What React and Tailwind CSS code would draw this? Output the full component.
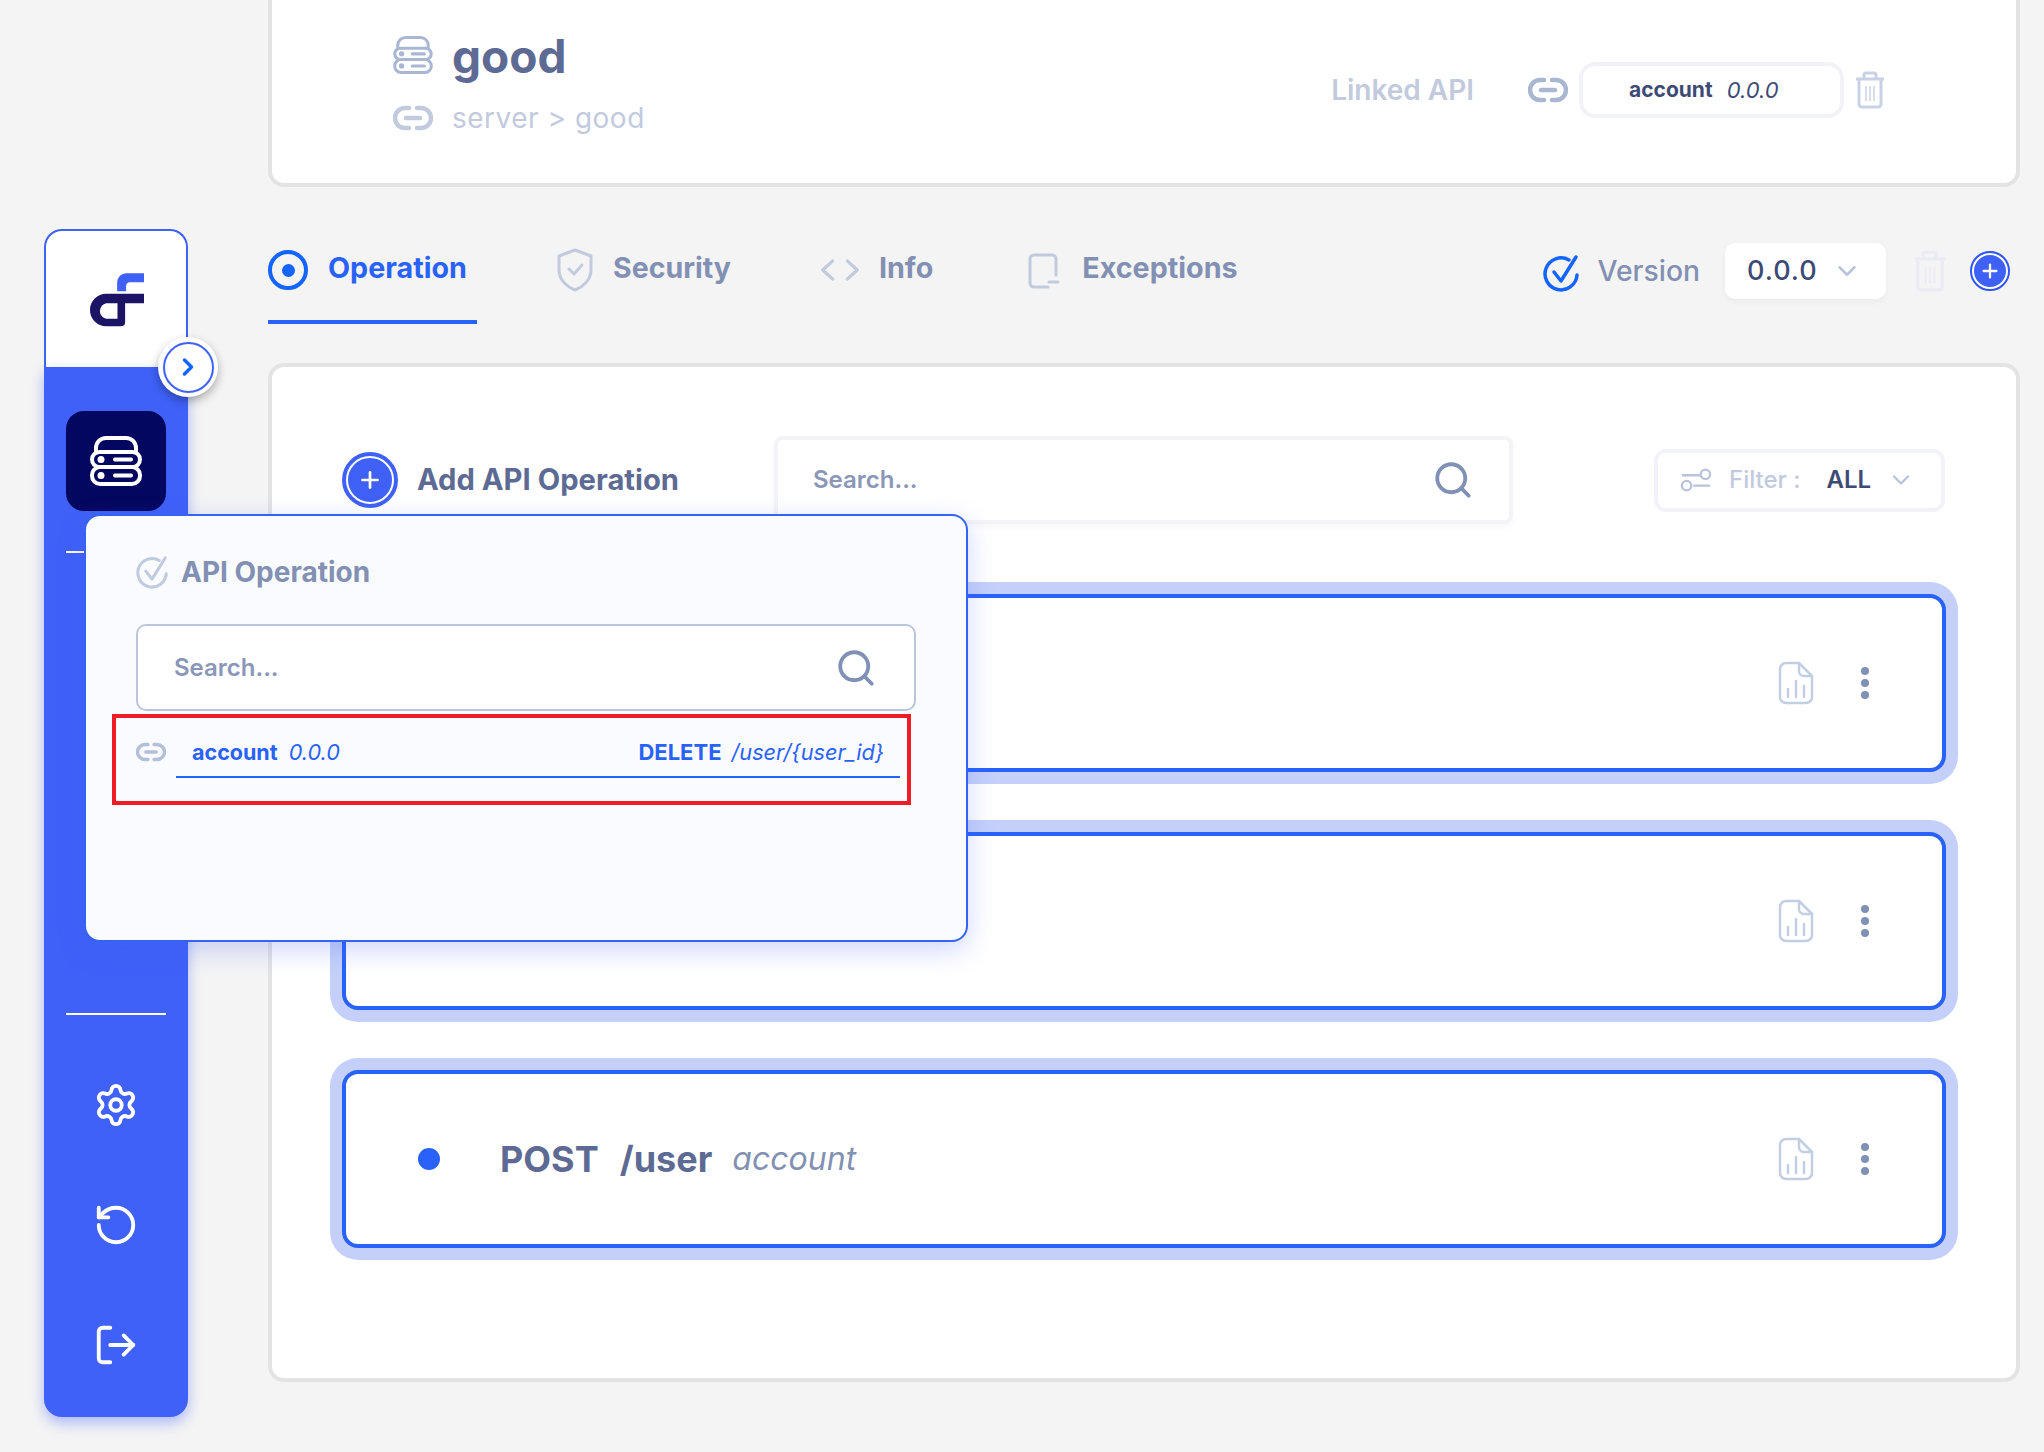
import { ChevronDown, ChevronRight, Settings, RotateCcw, LogOut, Search, Plus } from 'lucide-react';

function ServerIcon({ className }) {
  return (
    <svg viewBox="0 0 52 50" fill="none" stroke="currentColor" strokeWidth="4" className={className}>
      <path d="M6 16 v-4 a10 10 0 0 1 10-10 h20 a10 10 0 0 1 10 10 v4" />
      <rect x="2" y="16" width="48" height="15" rx="7.5" />
      <rect x="2" y="31" width="48" height="17" rx="8" />
      <circle cx="11" cy="23.5" r="1.5" fill="currentColor" />
      <circle cx="11" cy="39.5" r="1.5" fill="currentColor" />
      <path d="M25 23.5 h16 M25 39.5 h16" strokeLinecap="round" />
    </svg>
  );
}

function LinkIcon({ className }) {
  return (
    <svg viewBox="0 0 40 26" fill="none" stroke="currentColor" strokeWidth="4.5" strokeLinecap="round" className={className}>
      <path d="M16 3 H12 a10 10 0 0 0 0 20 h4" />
      <path d="M24 3 h4 a10 10 0 0 1 0 20 h-4" />
      <path d="M13 13 h14" />
    </svg>
  );
}

function TrashIcon({ className }) {
  return (
    <svg viewBox="0 0 32 38" fill="none" stroke="currentColor" strokeWidth="3" className={className}>
      <path d="M2 8 h28 M10 8 V4 a2 2 0 0 1 2-2 h8 a2 2 0 0 1 2 2 v4" />
      <path d="M5 8 v25 a3 3 0 0 0 3 3 h16 a3 3 0 0 0 3-3 V8" />
      <path d="M12 15 v15 M16 15 v15 M20 15 v15" strokeWidth="1.5" />
    </svg>
  );
}

function FileChartIcon({ className }) {
  return (
    <svg viewBox="0 0 36 44" fill="none" stroke="currentColor" strokeWidth="2.5" strokeLinecap="round" strokeLinejoin="round" className={className}>
      <path d="M21 2 H8 a6 6 0 0 0-6 6 v28 a6 6 0 0 0 6 6 h20 a6 6 0 0 0 6-6 V15 Z" />
      <path d="M21 2 v8 a5 5 0 0 0 5 5 h8" />
      <path d="M10 28 v8 M18 20 v16 M26 25 v11" />
    </svg>
  );
}

function CheckCircle({ className }) {
  return (
    <svg viewBox="0 0 36 38" fill="none" stroke="currentColor" strokeWidth="3.5" strokeLinecap="round" strokeLinejoin="round" className={className}>
      <path d="M26 6 A16 16 0 1 0 34 21" />
      <path d="M11 18 l7 9 L33 3" />
    </svg>
  );
}

function Logo() {
  return (
    <svg viewBox="170 150 175 170" className="w-[58px] h-[57px]">
      <path fillRule="evenodd" fill="#1c1464" d="M342 218 H228 a49 49 0 0 0 0 98 H272 q13 0 13-13 V246 H342 Z M262 246 V293 H228 a24 24 0 0 1 0-47 Z" />
      <path fill="#3f61f8" d="M261 210 V183 a27 27 0 0 1 27-27 H342 V183 H300 q-12 0-12 12 V210 Z" />
    </svg>
  );
}

function Sidebar() {
  return (
    <div className="relative ml-[44px] mt-[229px] w-[144px] h-[1188px] flex flex-col shrink-0">
      <div className="h-[138px] bg-white border-2 border-b-0 border-[#3f61f8] rounded-t-[18px] flex items-center justify-center">
        <Logo />
      </div>
      <div className="flex-1 bg-[#3f61f8] rounded-b-[18px] shadow-[0_6px_14px_rgba(63,97,248,0.4)] flex flex-col items-center pt-[44px]">
        <div className="w-[100px] h-[100px] bg-[#04075f] rounded-[18px] flex items-center justify-center">
          <ServerIcon className="w-[52px] h-[50px] text-white" />
        </div>
        <div className="w-[100px] h-[2px] bg-white mt-[40px]" />
        <div className="w-[100px] h-[2px] bg-white mt-[460px]" />
        <Settings className="w-[46px] h-[46px] text-white mt-[67px]" strokeWidth={2} />
        <RotateCcw className="w-[46px] h-[46px] text-white mt-[74px]" strokeWidth={2} />
        <LogOut className="w-[46px] h-[46px] text-white mt-[74px] -scale-x-100 rotate-180" strokeWidth={2} />
      </div>
      <div className="absolute left-[114px] top-[108px] w-[60px] h-[60px] rounded-full bg-white shadow-[0_4px_10px_rgba(0,0,0,0.3)] flex items-center justify-center">
        <div className="w-[51px] h-[51px] rounded-full border-2 border-[#3f61f8] flex items-center justify-center">
          <ChevronRight className="w-[28px] h-[28px] text-[#1464ff]" strokeWidth={3} />
        </div>
      </div>
    </div>
  );
}

function TopCard() {
  return (
    <div className="h-[187px] bg-white border-4 border-t-0 border-[#e3e3e3] rounded-b-[16px] flex items-start pl-[121px]">
      <div className="pt-[28px] flex flex-col gap-[6px]">
        <div className="h-[56px] flex items-center">
          <ServerIcon className="w-[40px] h-[38px] text-[#a9b7d3] -mt-[2px]" />
          <span className="ml-[19px] text-[46px] font-bold text-[#5d6b94] leading-none">good</span>
        </div>
        <div className="h-[56px] flex items-center">
          <LinkIcon className="w-[40px] h-[26px] text-[#c2cade]" />
          <span className="ml-[19px] text-[28px] text-[#c2cade] leading-none tracking-[0.5px]">server &gt; good</span>
        </div>
      </div>
      <div className="ml-auto mt-[62px] flex items-center h-[56px] pr-[130px]">
        <span className="text-[28px] font-semibold text-[#c2cade] -mt-[1px]">Linked API</span>
        <LinkIcon className="ml-[54px] w-[40px] h-[26px] text-[#a9b7d3]" />
        <div className="ml-[11px] w-[265px] h-[56px] bg-white border-4 border-[#f1f3f8] rounded-[16px] flex items-center pl-[46px] text-[22px] text-[#3d4a75]">
          <span className="text-[21px] font-bold">account</span>
          <span className="ml-[14px] italic">0.0.0</span>
        </div>
        <TrashIcon className="ml-[10px] w-[32px] h-[38px] text-[#c9d2e5]" />
      </div>
    </div>
  );
}

function Tabs() {
  return (
    <div className="h-[176px] pt-[56px] flex items-start">
      <div className="w-[209px] h-[81px] border-b-4 border-[#2962fa] flex items-start">
        <div className="w-[40px] h-[40px] mt-[7px] rounded-full border-[4px] border-[#1464ff] flex items-center justify-center">
          <div className="w-[13px] h-[13px] rounded-full bg-[#1464ff]" />
        </div>
        <span className="ml-[20px] mt-[7px] text-[28.7px] leading-[36px] font-bold text-[#2962fa]">Operation</span>
      </div>
      <div className="ml-[80px] flex items-start">
        <svg viewBox="0 0 36 44" fill="none" className="w-[36px] h-[44px] mt-[5px] text-[#c2cade]" stroke="currentColor" strokeWidth="3" strokeLinecap="round" strokeLinejoin="round">
          <path d="M18 2 L34 8 V22 C34 32 26 39 18 42 C10 39 2 32 2 22 V8 Z" />
          <path d="M12 21 l5 5 l8-9" />
        </svg>
        <span className="ml-[20px] mt-[7px] text-[28.5px] leading-[36px] font-bold text-[#8290b3]">Security</span>
      </div>
      <div className="ml-[89px] flex items-start">
        <svg viewBox="0 0 44 26" fill="none" className="w-[40px] h-[24px] mt-[15px] text-[#c2cade]" stroke="currentColor" strokeWidth="3.5" strokeLinecap="round" strokeLinejoin="round">
          <path d="M14 3 L3 13 L14 23 M30 3 L41 13 L30 23" />
        </svg>
        <span className="ml-[19px] mt-[7px] text-[28.7px] leading-[36px] font-bold text-[#8290b3]">Info</span>
      </div>
      <div className="ml-[95px] flex items-start">
        <svg viewBox="0 0 32 36" fill="none" className="w-[32px] h-[36px] mt-[10px] text-[#c2cade]" stroke="currentColor" strokeWidth="3" strokeLinecap="round">
          <path d="M28 22 V6 a4 4 0 0 0-4-4 H6 a4 4 0 0 0-4 4 v24 a4 4 0 0 0 4 4 h14" />
          <path d="M21 29 h9" />
        </svg>
        <span className="ml-[22px] mt-[7px] text-[28.7px] leading-[36px] font-bold text-[#8290b3]">Exceptions</span>
      </div>
      <div className="ml-auto flex items-center h-[56px] pr-[10px]">
        <CheckCircle className="w-[36px] h-[38px] mt-[3px] text-[#1464ff]" />
        <span className="ml-[18px] text-[28.3px] font-medium text-[#8290b3]">Version</span>
        <div className="ml-[25px] w-[161px] h-[56px] bg-white rounded-[10px] shadow-[0_3px_6px_rgba(0,0,0,0.04)] flex items-center pl-[22px] text-[27px] font-medium tracking-[1px] text-[#3d4a75]">
          0.0.0
          <ChevronDown className="ml-[14px] w-[30px] h-[30px] text-[#b9c4dc]" />
        </div>
        <TrashIcon className="ml-[25px] w-[38px] h-[42px] text-[#e9ecf3]" />
        <div className="ml-[21px] w-[40px] h-[40px] rounded-full bg-[#3f61f8] border-2 border-[#2f55f5] outline-2 outline-white -outline-offset-4 flex items-center justify-center">
          <Plus className="w-[22px] h-[22px] text-white" strokeWidth={2.5} />
        </div>
      </div>
    </div>
  );
}

function OperationCard({ method, path, api }) {
  return (
    <div className="h-[202px] p-[12px] bg-[#c4d0fa] rounded-[28px]">
      <div className="h-full bg-white border-4 border-[#2962fa] rounded-[16px] flex items-center pl-[72px] pr-[73px]">
        {method && (
          <>
            <div className="w-[22px] h-[22px] rounded-full bg-[#2962fa]" />
            <span className="ml-[60px] text-[36px] font-bold text-[#5d6b94]">{method}</span>
            <span className="ml-[21px] text-[36px] font-bold text-[#5d6b94]">{path}</span>
            <span className="ml-[20px] text-[32px] italic text-[#8290b3]">{api}</span>
          </>
        )}
        <FileChartIcon className="ml-auto w-[36px] h-[44px] text-[#c2cfe2]" />
        <div className="ml-[47px] flex flex-col gap-[4px]">
          <div className="w-[8px] h-[8px] rounded-full bg-[#8091b5]" />
          <div className="w-[8px] h-[8px] rounded-full bg-[#8091b5]" />
          <div className="w-[8px] h-[8px] rounded-full bg-[#8091b5]" />
        </div>
      </div>
    </div>
  );
}

function MainCard() {
  return (
    <div className="h-[1019px] bg-white border-4 border-[#e3e3e3] rounded-[16px] px-[58px] pt-[69px]">
      <div className="h-[88px] flex items-center pl-[12px] pr-[13px]">
        <div className="w-[56px] h-[56px] rounded-full bg-[#3f61f8] border-[4px] border-[#3f61f8] outline-2 outline-white -outline-offset-6 flex items-center justify-center">
          <Plus className="w-[26px] h-[26px] text-white" strokeWidth={2.5} />
        </div>
        <span className="ml-[19px] w-[262px] whitespace-nowrap text-[29.2px] font-bold text-[#5d6b94]">Add API Operation</span>
        <div className="ml-[95px] w-[739px] h-[88px] bg-white border-4 border-[#f3f4f7] rounded-[8px] shadow-[0_3px_6px_rgba(0,0,0,0.03)] flex items-center pl-[35px] pr-[35px]">
          <span className="text-[24px] font-semibold text-[#8a97b8]">Search...</span>
          <Search className="ml-auto w-[42px] h-[42px] text-[#8091b5]" strokeWidth={2.2} />
        </div>
        <div className="ml-auto w-[291px] h-[63px] bg-white border-4 border-[#f1f3f8] rounded-[12px] flex items-center pl-[22px]">
          <svg viewBox="0 0 34 26" fill="none" stroke="currentColor" strokeWidth="2.5" className="w-[32px] h-[26px] text-[#b9c4dc]">
            <path d="M2 8 h20 M14 19 h18" />
            <circle cx="27" cy="7" r="5" />
            <circle cx="7" cy="19" r="5" />
          </svg>
          <span className="ml-[17px] text-[24px] font-medium text-[#c2cade]">Filter :</span>
          <span className="ml-[26px] text-[24px] font-semibold text-[#3d4a75]">ALL</span>
          <ChevronDown className="ml-[16px] w-[28px] h-[28px] text-[#b9c4dc]" />
        </div>
      </div>
      <div className="mt-[58px] flex flex-col gap-[36px]">
        <OperationCard />
        <OperationCard />
        <OperationCard method="POST" path="/user" api="account" />
      </div>
    </div>
  );
}

function Popup() {
  return (
    <div className="absolute left-[84px] top-[514px] w-[884px] h-[428px] bg-[#fafbfe] border-2 border-[#3563f5] rounded-[16px] shadow-[0_8px_26px_rgba(63,97,248,0.25)] pl-[50px] pt-[39px]">
      <div className="h-[34px] flex items-center">
        <CheckCircle className="w-[32px] h-[34px] text-[#c2cade]" />
        <span className="ml-[13px] text-[28px] font-bold text-[#8290b3]">API Operation</span>
      </div>
      <div className="mt-[35px] w-[780px] h-[87px] bg-white border-2 border-[#bcc5db] rounded-[10px] flex items-center pl-[36px] pr-[37px]">
        <span className="text-[24px] font-semibold text-[#8a97b8]">Search...</span>
        <Search className="ml-auto w-[42px] h-[42px] text-[#8091b5]" strokeWidth={2.2} />
      </div>
      <div className="mt-[19px] h-[44px] flex items-center text-[21.7px] text-[#2962fa] w-[764px]">
        <LinkIcon className="w-[30px] h-[20px] text-[#b4c0d8]" />
        <span className="ml-[26px] text-[21.5px] font-bold">account</span>
        <span className="ml-[11px] italic">0.0.0</span>
        <span className="ml-auto text-[22px] font-bold">DELETE</span>
        <span className="ml-[10px] mr-[16px] italic">/user/{'{user_id}'}</span>
      </div>
      <div className="ml-[40px] mt-[2px] w-[724px] h-[2px] bg-[#2962fa]" />
      <div className="absolute left-[26px] top-[198px] w-[799px] h-[91px] border-4 border-[#ee1c25]" />
    </div>
  );
}

export default function App() {
  return (
    <div className="relative w-[2044px] h-[1452px] overflow-hidden bg-[#f4f4f4] flex items-start font-['Inter',sans-serif]">
      <Sidebar />
      <div className="ml-[80px] w-[1752px]">
        <TopCard />
        <Tabs />
        <MainCard />
      </div>
      <Popup />
    </div>
  );
}
